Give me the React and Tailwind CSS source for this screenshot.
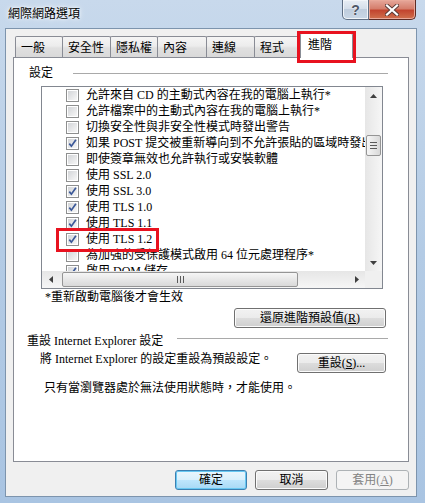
import React from "react";

const F = "font-['Liberation_Serif','Noto_Sans_CJK_TC',serif]";

function Check({ on }) {
  return (
    <span className="w-[13px] h-[13px] shrink-0 border border-[#8e8f8f] bg-white p-px flex">
      <span className="flex-1 bg-linear-to-br from-[#d3d5d8] to-[#f7f7f7] flex items-center justify-center">
        {on && (
          <svg width="11" height="11" viewBox="0 0 11 11" className="-m-px">
            <path d="M2.3 5.6 L4.4 8.2 L8.9 1.8" fill="none" stroke="#3b5898" strokeWidth="1.7" />
          </svg>
        )}
      </span>
    </span>
  );
}

const items = [
  [false, "允許來自 CD 的主動式內容在我的電腦上執行*"],
  [false, "允許檔案中的主動式內容在我的電腦上執行*"],
  [false, "切換安全性與非安全性模式時發出警告"],
  [true, "如果 POST 提交被重新導向到不允許張貼的區域時發出警告"],
  [false, "即使簽章無效也允許執行或安裝軟體"],
  [false, "使用 SSL 2.0"],
  [true, "使用 SSL 3.0"],
  [true, "使用 TLS 1.0"],
  [true, "使用 TLS 1.1"],
  [true, "使用 TLS 1.2"],
  [false, "為加強的受保護模式啟用 64 位元處理程序*"],
  [true, "啟用 DOM 儲存"],
];

function Btn({ children, className = "" }) {
  return (
    <div
      className={
        "h-[20px] border border-[#707070] rounded-[3px] bg-[linear-gradient(#f2f2f2,#ebebeb_50%,#dddddd_50%,#cfcfcf)] shadow-[inset_0_0_0_1px_#fbfbfb] flex items-center justify-center text-[12px] text-black " +
        className
      }
    >
      {children}
    </div>
  );
}

const tabs = [
  ["一般", "w-[48px]"],
  ["安全性", "w-[49px]"],
  ["隱私權", "w-[48px]"],
  ["內容", "w-[50px]"],
  ["連線", "w-[49px]"],
  ["程式", "w-[47px]"],
];

export default function App() {
  return (
    <div className={`${F} relative w-[425px] h-[503px] overflow-hidden bg-linear-to-b from-[#c8d9ec] via-[#b3cbe5] to-[#a9c4e2] flex flex-col text-[12px] text-black`}>
      {/* title bar */}
      <div className="h-[28px] flex items-start shrink-0">
        <div className="pl-[8px] pt-[6px] leading-[16px] text-[12px] [text-shadow:0_0_6px_#ffffff,0_0_3px_#ffffff]">網際網路選項</div>
        <div className="ml-auto mr-[9px] flex">
          <div className="w-[27px] h-[20px] border border-[#5f6f84] border-t-0 rounded-bl-[5px] bg-[linear-gradient(#e8eef5,#d3dde9_50%,#bfcddd_50%,#c9d7e6)] shadow-[inset_0_0_0_1px_#f1f5f9] flex items-center justify-center">
            <span className="font-['Liberation_Sans',sans-serif] font-bold text-[14px] leading-none text-[#4f5968] [text-shadow:0_0_2px_#ffffff]">?</span>
          </div>
          <div className="w-[47px] h-[20px] border border-[#5d2c25] border-t-0 border-l-0 rounded-br-[5px] bg-[linear-gradient(#e6a89b,#d57e6c_45%,#c2452f_55%,#d0714e)] shadow-[inset_0_0_0_1px_#e9a99a] flex items-center justify-center">
            <svg width="14" height="12" viewBox="0 0 14 12">
              <path d="M2 1.5 L12 10.5 M12 1.5 L2 10.5" stroke="#5a3a36" strokeWidth="4" strokeLinecap="square" />
              <path d="M2 1.5 L12 10.5 M12 1.5 L2 10.5" stroke="#ffffff" strokeWidth="2.2" strokeLinecap="square" />
            </svg>
          </div>
        </div>
      </div>

      {/* client area */}
      <div className="ml-[5px] w-[412px] h-[469px] border border-[#7d94ad] bg-[#f0f0f0] flex flex-col shrink-0">
        {/* tabs */}
        <div className="mt-[4px] ml-[7px] h-[24px] flex items-end pl-[2px]">
          {tabs.map(([t, w], i) => (
            <div
              key={t}
              className={`${w} ${i > 0 ? "-ml-px" : ""} h-[21px] border border-b-0 border-[#898c95] rounded-t-[2px] bg-[linear-gradient(#f5f5f5,#ececec_45%,#e0e0e0_55%,#d9d9d9)] pl-[5px] pt-[3px] leading-[16px] whitespace-nowrap`}
            >
              {t}
            </div>
          ))}
          <div className="-ml-px w-[53px] h-[25px] -mb-px z-10 border border-b-0 border-[#898c95] rounded-t-[2px] bg-white pl-[7px] pt-[3px] leading-[16px]">
            進階
          </div>
        </div>

        {/* panel */}
        <div className="ml-[7px] w-[396px] h-[405px] border border-[#898c95] bg-white flex flex-col">
          <div className="mt-[7px] h-[16px] flex items-center pl-[15px] pr-[20px]">
            <span className="leading-[16px]">設定</span>
            <div className="ml-[20px] flex-1 h-px bg-[#a9a9a9]" />
          </div>

          {/* listbox */}
          <div className="ml-[27px] mt-[5px] w-[342px] h-[203px] border border-[#828790] bg-white grid grid-cols-[1fr_17px] grid-rows-[1fr_17px]">
            <div className="overflow-hidden">
              {items.map(([on, t]) => (
                <div key={t} className="h-[16px] flex items-center pl-[24px] gap-[7px] whitespace-nowrap leading-[16px]">
                  <Check on={on} />
                  <span>{t}</span>
                </div>
              ))}
            </div>
            {/* vertical scrollbar */}
            <div className="bg-linear-to-r from-[#e6e6e6] to-[#f6f6f6] flex flex-col items-center">
              <div className="h-[17px] w-full flex items-center justify-center">
                <svg width="7" height="4" viewBox="0 0 7 4"><path d="M0 4 L3.5 0 L7 4Z" fill="#3f3f3f" /></svg>
              </div>
              <div className="mt-[31px] w-[15px] h-[21px] border border-[#959595] rounded-[2px] bg-linear-to-r from-[#f6f6f6] to-[#d9d9d9] flex flex-col items-center justify-center gap-[2px]">
                <div className="w-[7px] h-px bg-[#5a5a5a]" />
                <div className="w-[7px] h-px bg-[#5a5a5a]" />
                <div className="w-[7px] h-px bg-[#5a5a5a]" />
              </div>
              <div className="flex-1" />
              <div className="h-[17px] w-full flex items-center justify-center">
                <svg width="7" height="4" viewBox="0 0 7 4"><path d="M0 0 L3.5 4 L7 0Z" fill="#3f3f3f" /></svg>
              </div>
            </div>
            {/* horizontal scrollbar */}
            <div className="bg-linear-to-b from-[#e6e6e6] to-[#f6f6f6] flex items-center">
              <div className="w-[17px] h-full flex items-center justify-center">
                <svg width="4" height="7" viewBox="0 0 4 7"><path d="M4 0 L0 3.5 L4 7Z" fill="#3f3f3f" /></svg>
              </div>
              <div className="ml-[3px] w-[236px] h-[15px] border border-[#959595] rounded-[2px] bg-linear-to-b from-[#f6f6f6] to-[#d9d9d9] flex items-center justify-center gap-[2px]">
                <div className="w-px h-[7px] bg-[#5a5a5a]" />
                <div className="w-px h-[7px] bg-[#5a5a5a]" />
                <div className="w-px h-[7px] bg-[#5a5a5a]" />
              </div>
              <div className="flex-1" />
              <div className="w-[17px] h-full flex items-center justify-center">
                <svg width="4" height="7" viewBox="0 0 4 7"><path d="M0 0 L4 3.5 L0 7Z" fill="#3f3f3f" /></svg>
              </div>
            </div>
            <div className="bg-[#f0f0f0]" />
          </div>

          <div className="ml-[31px] h-[16px] leading-[16px]">*重新啟動電腦後才會生效</div>

          <div className="mt-[3px] ml-[220px]">
            <Btn className="w-[152px]">
              還原進階預設值(<u>R</u>)
            </Btn>
          </div>

          <div className="mt-[5px] h-[16px] flex items-center pl-[13px] pr-[20px]">
            <span className="leading-[16px] whitespace-nowrap">重設 Internet Explorer 設定</span>
            <div className="ml-[14px] flex-1 h-px bg-[#a9a9a9] -mt-[5px]" />
          </div>

          <div className="mt-[2px] flex items-start pl-[26px]">
            <span className="leading-[16px] whitespace-nowrap">將 Internet Explorer 的設定重設為預設設定。</span>
            <div className="ml-auto mr-[22px] mt-[2px]">
              <Btn className="w-[89px]">
                重設(<u>S</u>)...
              </Btn>
            </div>
          </div>

          <div className="mt-[7px] pl-[30px] leading-[16px]">只有當瀏覽器處於無法使用狀態時，才能使用。</div>
        </div>

        {/* bottom buttons */}
        <div className="mt-[8px] mr-[7px] flex justify-end gap-[8px]">
          <div className="w-[72px] h-[20px] border border-[#3c7fb1] rounded-[3px] bg-[linear-gradient(#eaf6fd,#d9f0fc_50%,#bee6fd_50%,#a7d9f5)] shadow-[inset_0_0_0_1px_#68c8f2] flex items-center justify-center">
            確定
          </div>
          <Btn className="w-[73px]">取消</Btn>
          <div className="w-[73px] h-[20px] border border-[#adb2b5] rounded-[3px] bg-[#f4f4f4] flex items-center justify-center text-[#838383]">
            套用(<u>A</u>)
          </div>
        </div>
      </div>

      {/* red annotation boxes */}
      <div className="absolute left-[297px] top-[31px] w-[59px] h-[32px] border-[3px] border-[#e8121f] pointer-events-none z-20" />
      <div className="absolute left-[56px] top-[228px] w-[103px] h-[24px] border-[3px] border-[#e8121f] pointer-events-none z-20" />
    </div>
  );
}
